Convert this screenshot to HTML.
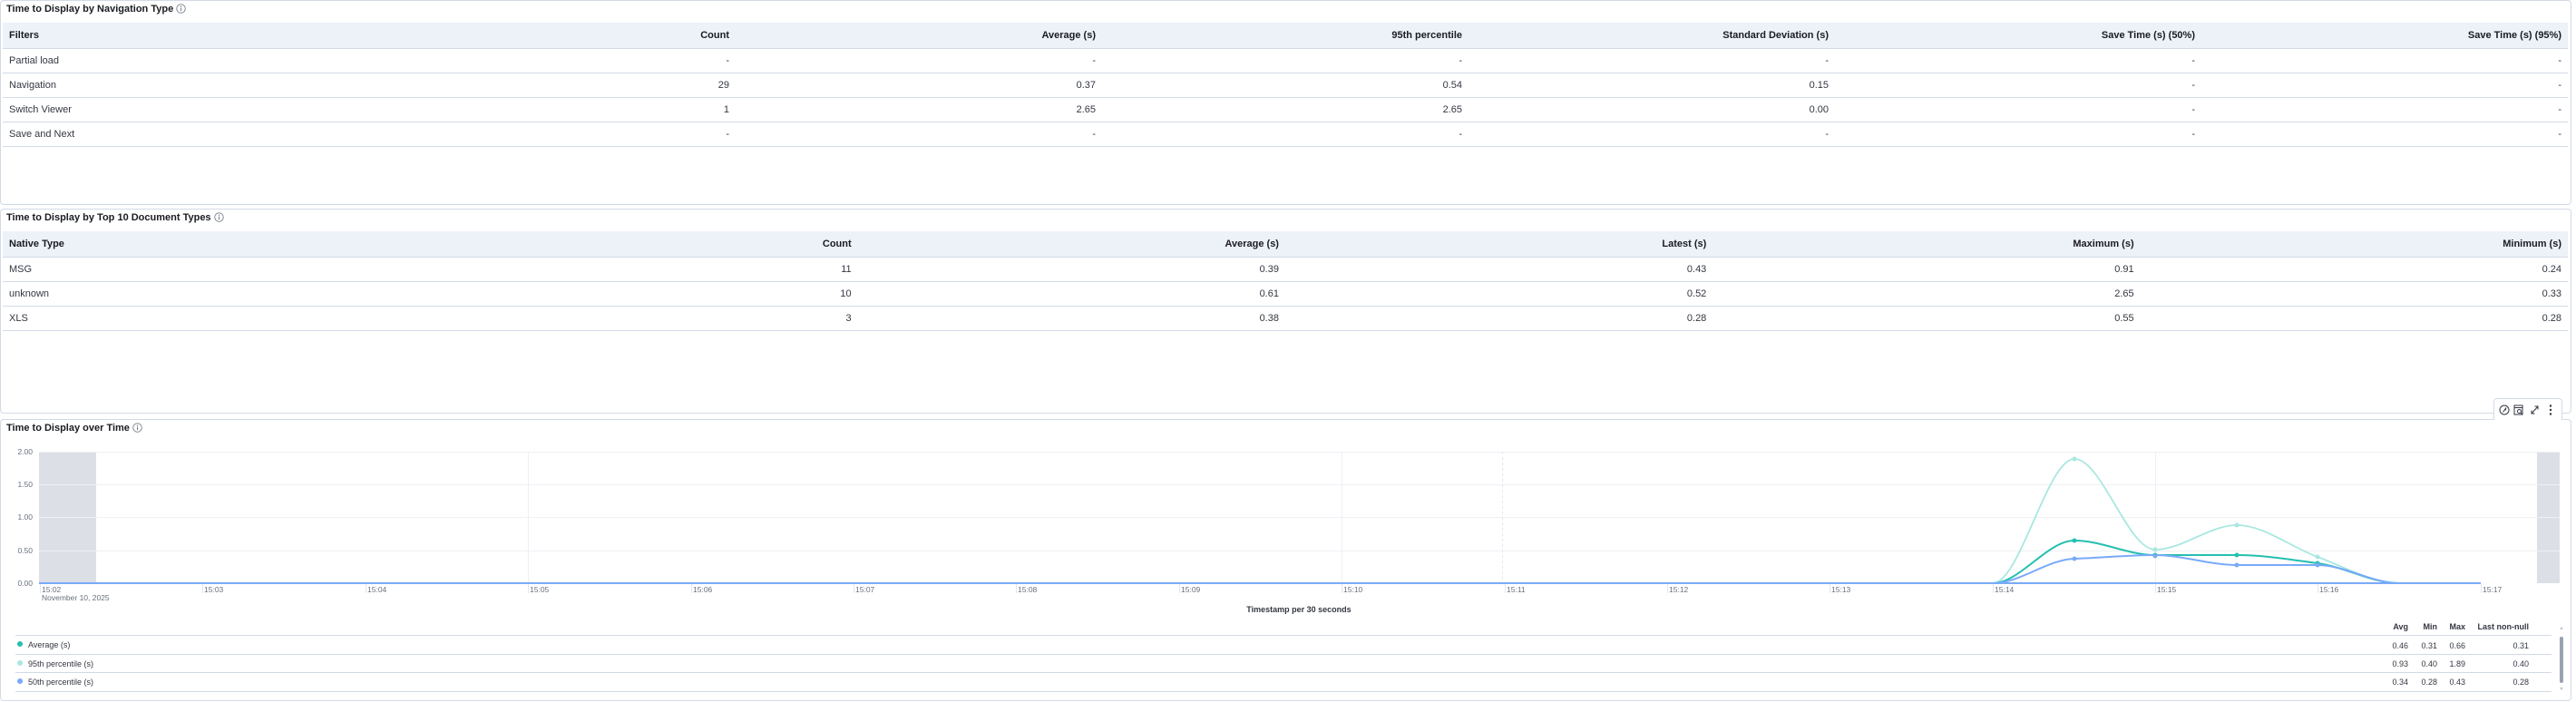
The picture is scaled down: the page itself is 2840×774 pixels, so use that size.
<!DOCTYPE html>
<html><head><meta charset="utf-8"><style>
*{box-sizing:border-box;margin:0;padding:0}
body{width:2840px;height:774px;background:#fff;font-family:"Liberation Sans",sans-serif;color:#343741;position:relative;overflow:hidden;font-size:11px}
.panel{position:absolute;left:0;width:2835px;border:1px solid #d3dae6;border-radius:4px;background:#fff}
.title{position:absolute;left:6px;font-weight:bold;color:#1a1c21;font-size:11px;white-space:nowrap}
.title svg{vertical-align:-2px;margin-left:3px}
table{position:absolute;left:2px;width:2828px;border-collapse:collapse;table-layout:fixed}
th{background:#edf1f8;font-weight:bold;color:#1a1c21;text-align:right;padding:0 7px;height:28px;border-bottom:1px solid #d3dae6}
td{text-align:right;padding:0 7px;height:27px;border-bottom:1px solid #d3dae6}
th:first-child,td:first-child{text-align:left}
.tb{position:absolute;left:2749px;top:439px;width:76px;height:24px;border:1px solid #d3dae6;border-bottom:none;border-radius:4px 4px 0 0;background:#fff;z-index:3}
</style></head><body>

<div class="panel" style="top:0;height:226px">
<div class="title" style="top:3px">Time to Display by Navigation Type<svg width="11" height="11" viewBox="0 0 12 12"><circle cx="6" cy="6" r="5.2" fill="none" stroke="#69707d" stroke-width="0.9"/><rect x="5.5" y="5" width="1" height="4" fill="#69707d"/><circle cx="6" cy="3.4" r="0.7" fill="#69707d"/></svg></div>
<table style="top:24px">
<tr><th>Filters</th><th>Count</th><th>Average (s)</th><th>95th percentile</th><th>Standard Deviation (s)</th><th>Save Time (s) (50%)</th><th>Save Time (s) (95%)</th></tr>
<tr><td>Partial load</td><td>-</td><td>-</td><td>-</td><td>-</td><td>-</td><td>-</td></tr>
<tr><td>Navigation</td><td>29</td><td>0.37</td><td>0.54</td><td>0.15</td><td>-</td><td>-</td></tr>
<tr><td>Switch Viewer</td><td>1</td><td>2.65</td><td>2.65</td><td>0.00</td><td>-</td><td>-</td></tr>
<tr><td>Save and Next</td><td>-</td><td>-</td><td>-</td><td>-</td><td>-</td><td>-</td></tr>
</table>
</div>

<div class="panel" style="top:230px;height:226px">
<div class="title" style="top:3px">Time to Display by Top 10 Document Types<svg width="11" height="11" viewBox="0 0 12 12"><circle cx="6" cy="6" r="5.2" fill="none" stroke="#69707d" stroke-width="0.9"/><rect x="5.5" y="5" width="1" height="4" fill="#69707d"/><circle cx="6" cy="3.4" r="0.7" fill="#69707d"/></svg></div>
<table style="top:24px">
<tr><th>Native Type</th><th>Count</th><th>Average (s)</th><th>Latest (s)</th><th>Maximum (s)</th><th>Minimum (s)</th></tr>
<tr><td>MSG</td><td>11</td><td>0.39</td><td>0.43</td><td>0.91</td><td>0.24</td></tr>
<tr><td>unknown</td><td>10</td><td>0.61</td><td>0.52</td><td>2.65</td><td>0.33</td></tr>
<tr><td>XLS</td><td>3</td><td>0.38</td><td>0.28</td><td>0.55</td><td>0.28</td></tr>
</table>
</div>

<div class="tb"><svg width="76" height="24" viewBox="0 0 76 24" fill="none" stroke="#343741" stroke-width="1">
<circle cx="11" cy="12" r="5"/><path d="M13 9.5 L9.5 14.5 M13 9.5 L12 12.5"/>
<rect x="22" y="7" width="9" height="10"/><path d="M22 9.5h9"/><circle cx="27.5" cy="13.5" r="2"/><path d="M29 15 L31 17"/>
<path d="M41 16 L48 8 M44.5 8 H48 V11.5 M41 12.5 V16 H44.5"/>
<g fill="#343741" stroke="none"><circle cx="62" cy="7.5" r="1.2"/><circle cx="62" cy="12" r="1.2"/><circle cx="62" cy="16.5" r="1.2"/></g>
</svg></div>

<div class="panel" style="top:462px;height:311px">
<div class="title" style="top:3px">Time to Display over Time<svg width="11" height="11" viewBox="0 0 12 12"><circle cx="6" cy="6" r="5.2" fill="none" stroke="#69707d" stroke-width="0.9"/><rect x="5.5" y="5" width="1" height="4" fill="#69707d"/><circle cx="6" cy="3.4" r="0.7" fill="#69707d"/></svg></div>
</div>

<svg style="position:absolute;left:0;top:0" width="2840" height="774" font-family="Liberation Sans, sans-serif">
<rect x="43" y="498" width="63" height="145" fill="#dcdfe6"/>
<rect x="2797" y="498" width="25" height="145" fill="#dcdfe6"/>
<g stroke="#eef0f5" stroke-width="1">
<line x1="43" y1="498.5" x2="2822" y2="498.5"/><line x1="43" y1="534.5" x2="2822" y2="534.5"/><line x1="43" y1="570.5" x2="2822" y2="570.5"/><line x1="43" y1="607.5" x2="2822" y2="607.5"/>
<line x1="582.5" y1="498" x2="582.5" y2="643"/><line x1="1479.5" y1="498" x2="1479.5" y2="643"/><line x1="2376.5" y1="498" x2="2376.5" y2="643"/>
</g>
<line x1="1656.5" y1="498" x2="1656.5" y2="643" stroke="#e3e6ec" stroke-dasharray="3,3"/>
<g fill="#69707d" font-size="8.5" text-anchor="end">
<text x="36" y="501">2.00</text><text x="36" y="537">1.50</text><text x="36" y="573">1.00</text><text x="36" y="610">0.50</text><text x="36" y="646">0.00</text>
</g>
<g stroke="#e3e6ec"><line x1="44.5" y1="644" x2="44.5" y2="654"/><line x1="223.5" y1="644" x2="223.5" y2="654"/><line x1="403.5" y1="644" x2="403.5" y2="654"/><line x1="582.5" y1="644" x2="582.5" y2="654"/><line x1="762.5" y1="644" x2="762.5" y2="654"/><line x1="941.5" y1="644" x2="941.5" y2="654"/><line x1="1120.5" y1="644" x2="1120.5" y2="654"/><line x1="1300.5" y1="644" x2="1300.5" y2="654"/><line x1="1479.5" y1="644" x2="1479.5" y2="654"/><line x1="1659.5" y1="644" x2="1659.5" y2="654"/><line x1="1838.5" y1="644" x2="1838.5" y2="654"/><line x1="2017.5" y1="644" x2="2017.5" y2="654"/><line x1="2197.5" y1="644" x2="2197.5" y2="654"/><line x1="2376.5" y1="644" x2="2376.5" y2="654"/><line x1="2555.5" y1="644" x2="2555.5" y2="654"/><line x1="2735.5" y1="644" x2="2735.5" y2="654"/></g>
<g fill="#69707d" font-size="8.5">
<text x="46" y="653">15:02</text><text x="46" y="662">November 10, 2025</text>
<text x="225" y="653">15:03</text><text x="405" y="653">15:04</text><text x="584" y="653">15:05</text><text x="764" y="653">15:06</text><text x="943" y="653">15:07</text><text x="1122" y="653">15:08</text><text x="1302" y="653">15:09</text><text x="1481" y="653">15:10</text><text x="1661" y="653">15:11</text><text x="1840" y="653">15:12</text><text x="2019" y="653">15:13</text><text x="2199" y="653">15:14</text><text x="2378" y="653">15:15</text><text x="2557" y="653">15:16</text><text x="2737" y="653">15:17</text>
</g>
<text x="1432" y="675" font-size="9" font-weight="bold" fill="#343741" text-anchor="middle">Timestamp per 30 seconds</text>
<line x1="43" y1="643" x2="2735" y2="643" stroke="#79aaf9" stroke-width="2"/>
<path d="M2197,643 C2227,643 2257,506 2287,506 C2317,506 2346,606 2376,606 C2406,606 2436,579 2466,579 C2496,579 2525,603 2555,614 C2585,625 2615,643 2645,643" fill="none" stroke="#a8e8e0" stroke-width="1.8"/>
<path d="M2197,643 C2227,643 2257,596 2287,596 C2317,596 2346,612 2376,612 L2466,612 C2496,612 2525,617 2555,621 C2585,625 2615,643 2645,643" fill="none" stroke="#25bfb0" stroke-width="2"/>
<path d="M2197,643 C2227,643 2257,617 2287,616 C2317,615 2346,612 2376,612 C2406,612 2436,623 2466,623 L2555,623 C2585,623 2615,643 2645,643" fill="none" stroke="#79aaf9" stroke-width="2"/>
<g fill="#a8e8e0"><circle cx="2287" cy="506" r="2.5"/><circle cx="2376" cy="606" r="2.5"/><circle cx="2466" cy="579" r="2.5"/><circle cx="2555" cy="614" r="2.5"/></g>
<g fill="#25bfb0"><circle cx="2287" cy="596" r="2.5"/><circle cx="2376" cy="612" r="2.5"/><circle cx="2466" cy="612" r="2.5"/><circle cx="2555" cy="621" r="2.5"/></g>
<g fill="#79aaf9"><circle cx="2287" cy="616" r="2.5"/><circle cx="2376" cy="613" r="2.5"/><circle cx="2466" cy="623" r="2.5"/><circle cx="2555" cy="623" r="2.5"/></g>
<g stroke="#d3dae6"><line x1="17" y1="700.5" x2="2813" y2="700.5"/><line x1="17" y1="721.5" x2="2813" y2="721.5"/><line x1="17" y1="741.5" x2="2813" y2="741.5"/><line x1="17" y1="762.5" x2="2813" y2="762.5"/></g>
<g font-size="9" fill="#343741">
<text x="2655" y="694" text-anchor="end" font-weight="bold">Avg</text><text x="2687" y="694" text-anchor="end" font-weight="bold">Min</text><text x="2718" y="694" text-anchor="end" font-weight="bold">Max</text><text x="2788" y="694" text-anchor="end" font-weight="bold">Last non-null</text>
<circle cx="22" cy="710" r="3" fill="#25bfb0"/><text x="31" y="714">Average (s)</text>
<circle cx="22" cy="731" r="3" fill="#a8e8e0"/><text x="31" y="735">95th percentile (s)</text>
<circle cx="22" cy="751" r="3" fill="#79aaf9"/><text x="31" y="755">50th percentile (s)</text>
<g text-anchor="end"><text x="2655" y="715">0.46</text><text x="2687" y="715">0.31</text><text x="2718" y="715">0.66</text><text x="2788" y="715">0.31</text>
<text x="2655" y="735">0.93</text><text x="2687" y="735">0.40</text><text x="2718" y="735">1.89</text><text x="2788" y="735">0.40</text>
<text x="2655" y="755">0.34</text><text x="2687" y="755">0.28</text><text x="2718" y="755">0.43</text><text x="2788" y="755">0.28</text></g>
</g>
<rect x="2822" y="702" width="4" height="51" rx="2" fill="#98a2b3"/>
<path d="M2822 694 L2824 691 L2826 694Z M2822 758 L2824 761 L2826 758Z" fill="#c0c6d0"/>
</svg>
</body></html>
